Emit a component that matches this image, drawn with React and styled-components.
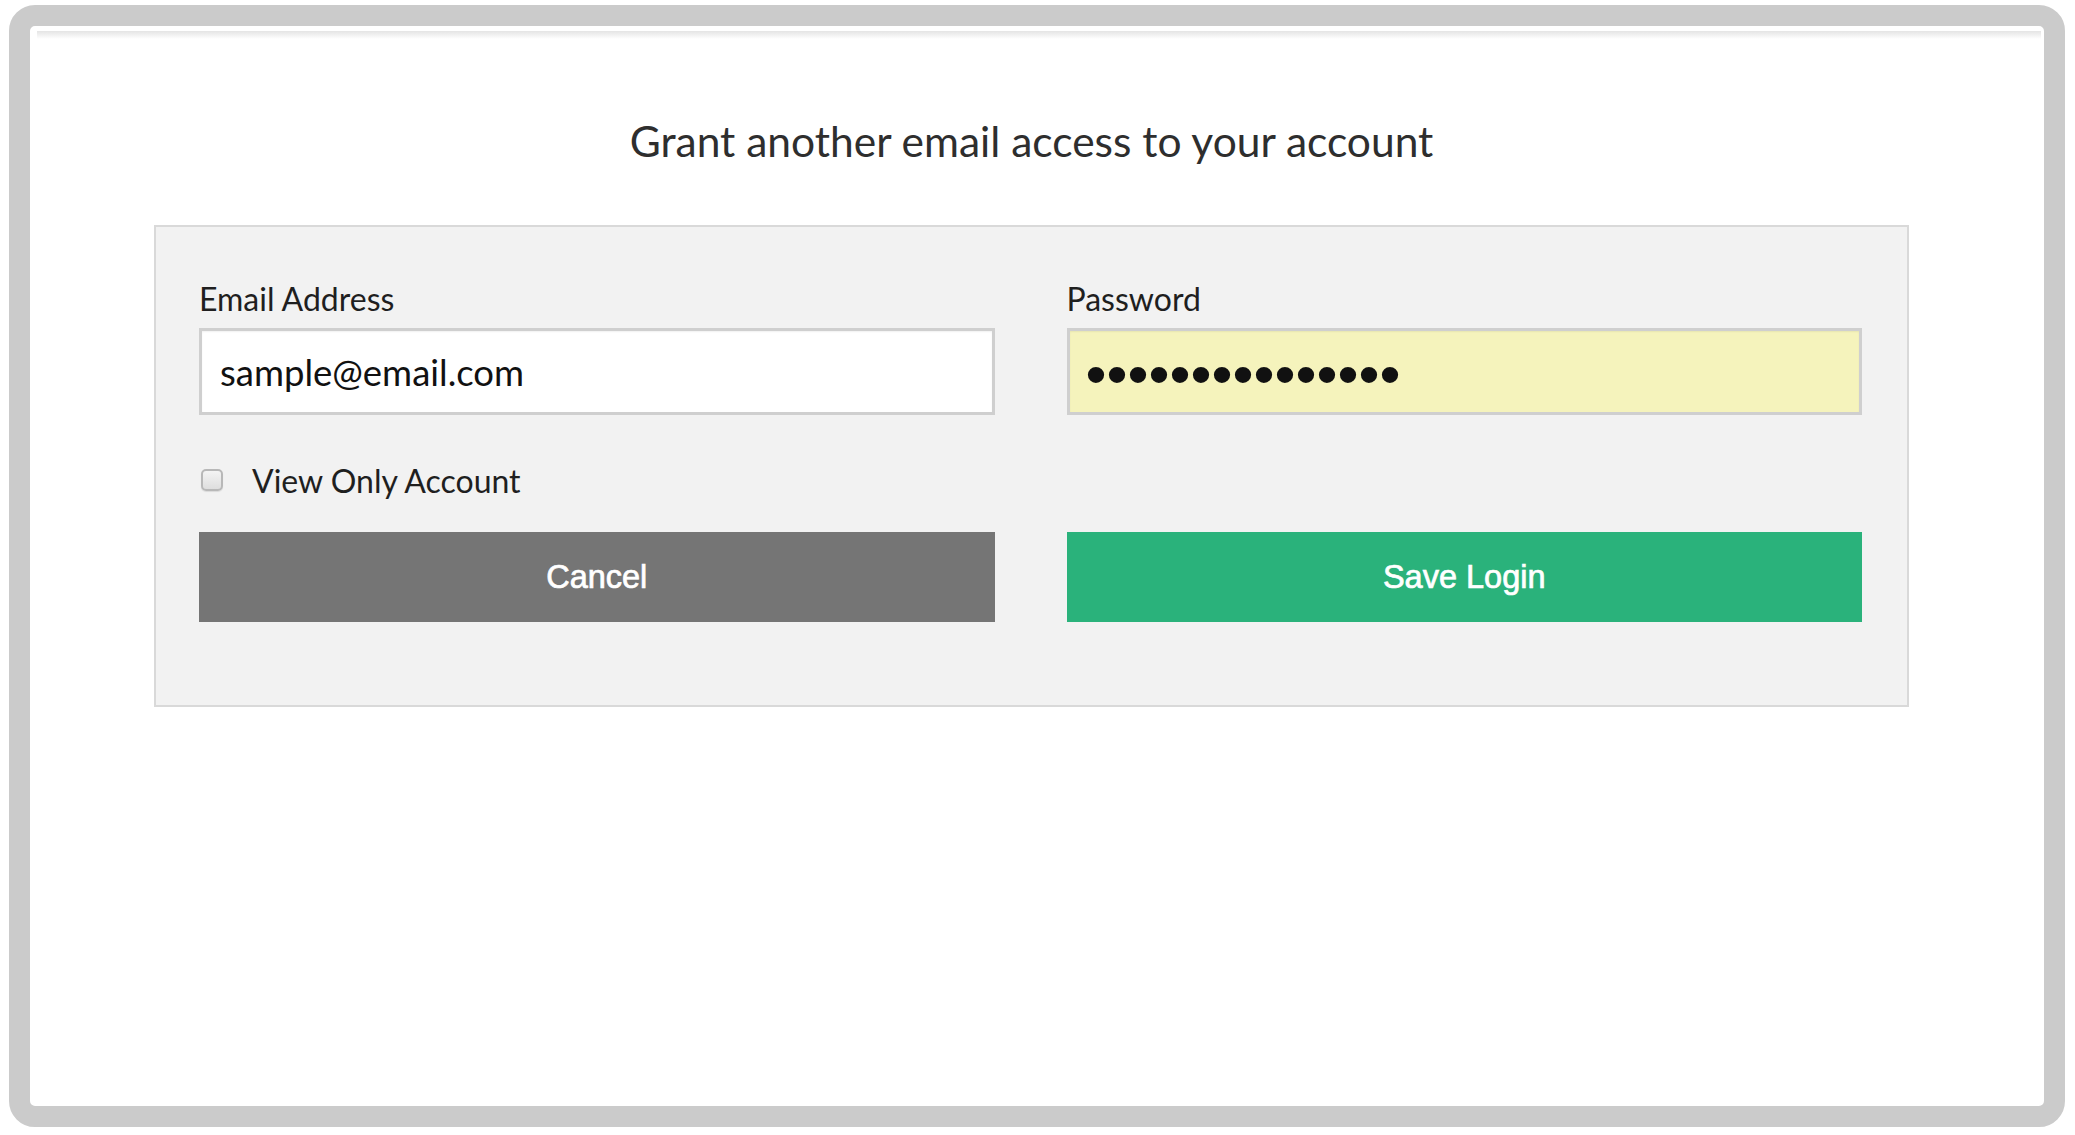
import React from "react";
import styled, { createGlobalStyle } from "styled-components";

const GlobalStyle = createGlobalStyle`
  html, body {
    margin: 0;
    padding: 0;
    background: #ffffff;
  }
  * {
    box-sizing: border-box;
  }
`;

const AddLoginForm = () => {
  const [email, setEmail] = React.useState("sample@email.com");
  const [password, setPassword] = React.useState("abcdefghijklmno");
  const [viewOnly, setViewOnly] = React.useState(false);

  return (
    <Frame>
      <TopShade />
      <Content>
        <Title>Grant another email access to your account</Title>
        <Panel>
          <Columns>
            <Field>
              <Label htmlFor="email">Email Address</Label>
              <Input
                id="email"
                type="text"
                value={email}
                onChange={(ev) => setEmail(ev.target.value)}
              />
            </Field>
            <Field>
              <Label htmlFor="password">Password</Label>
              <Input
                id="password"
                type="password"
                $filled
                value={password}
                onChange={(ev) => setPassword(ev.target.value)}
              />
            </Field>
          </Columns>
          <CheckRow>
            <Checkbox
              id="viewOnly"
              type="checkbox"
              checked={viewOnly}
              onChange={() => setViewOnly(!viewOnly)}
            />
            <CheckLabel htmlFor="viewOnly">View Only Account</CheckLabel>
          </CheckRow>
          <Columns>
            <Button $color="#757575">Cancel</Button>
            <Button $color="#2ab27b">Save Login</Button>
          </Columns>
        </Panel>
      </Content>
    </Frame>
  );
};

const App = () => (
  <>
    <GlobalStyle />
    <AddLoginForm />
  </>
);

const Frame = styled.div`
  margin: 5px 10px 8px 9px;
  height: 1122px;
  border: 21px solid #cbcbcb;
  border-radius: 26px;
  background: #ffffff;
  overflow: hidden;
`;

const TopShade = styled.div`
  height: 8px;
  margin: 5px 3px 0 7px;
  background: linear-gradient(#e4e4e4, #ffffff);
`;

const Content = styled.div`
  width: 1755px;
  margin-left: 124px;
`;

const Title = styled.h1`
  margin: 0;
  padding: 78px 0 0;
  height: 186px;
  text-align: center;
  font-family: Lato, "Open Sans", sans-serif;
  font-weight: 400;
  font-size: 42.5px;
  line-height: 48px;
  color: #2e2e2e;
`;

const Panel = styled.div`
  background: #f2f2f2;
  border: 2px solid #d9d9d9;
  padding: 52px 45px 83px 43px;
`;

const Columns = styled.div`
  display: grid;
  grid-template-columns: minmax(0, 1fr) minmax(0, 1fr);
  column-gap: 72px;
`;

const Field = styled.div`
  display: flex;
  flex-direction: column;
  min-width: 0;
`;

const Label = styled.label`
  font-family: Lato, "Open Sans", sans-serif;
  font-size: 32px;
  line-height: 40px;
  color: #1f1f1f;
  margin-bottom: 9px;
`;

const Input = styled.input`
  width: 100%;
  min-width: 0;
  height: 87px;
  padding: ${(p) => (p.$filled ? "6px 16px 0" : "0 18px")};
  border: 3px solid #cfcfcf;
  border-radius: 0;
  background: ${(p) => (p.$filled ? "#f5f3bc" : "#ffffff")};
  box-shadow: inset 0 1px 2px rgba(0, 0, 0, 0.06);
  font-family: ${(p) =>
    p.$filled ? '"Liberation Sans", Arial, sans-serif' : 'Lato, "Open Sans", sans-serif'};
  font-size: ${(p) => (p.$filled ? "60px" : "36.5px")};
  color: #111111;
  outline: none;
`;

const CheckRow = styled.div`
  display: flex;
  align-items: center;
  height: 117px;
  padding: 13px 0 0 2px;
`;

const Checkbox = styled.input`
  appearance: none;
  width: 22px;
  height: 22px;
  margin: 0 29px 0 0;
  border: 2px solid #b8b8b8;
  border-radius: 5px;
  background: linear-gradient(#f4f4f4, #dedede);
  box-shadow: 0 1px 1px rgba(0, 0, 0, 0.1);
  cursor: pointer;

  &:checked {
    background: #2ab27b;
    border-color: #23965f;
  }
`;

const CheckLabel = styled.label`
  font-family: Lato, "Open Sans", sans-serif;
  font-size: 32px;
  color: #1f1f1f;
  cursor: pointer;
`;

const Button = styled.button`
  height: 90px;
  border: none;
  background: ${(p) => p.$color};
  color: #ffffff;
  font-family: "Liberation Sans", Arial, sans-serif;
  font-weight: 400;
  font-size: 32.5px;
  -webkit-text-stroke: 0.7px #ffffff;
  cursor: pointer;
`;

export default App;
